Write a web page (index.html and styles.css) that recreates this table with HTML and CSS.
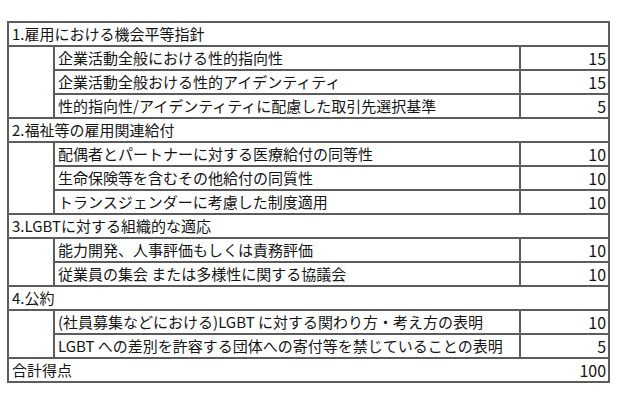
FILE: index.html
```html
<!DOCTYPE html>
<html lang="ja">
<head>
<meta charset="utf-8">
<link rel="stylesheet" href="styles.css">
</head>
<body>
<table class="score">
  <colgroup>
    <col class="c-ind">
    <col class="c-item">
    <col class="c-val">
  </colgroup>
  <tr class="sec"><td colspan="3">1.雇用における機会平等指針</td></tr>
  <tr><td class="ind" rowspan="3"></td><td class="item">企業活動全般における性的指向性</td><td class="val">15</td></tr>
  <tr><td class="item">企業活動全般おける性的アイデンティティ</td><td class="val">15</td></tr>
  <tr><td class="item">性的指向性/アイデンティティに配慮した取引先選択基準</td><td class="val">5</td></tr>
  <tr class="sec"><td colspan="3">2.福祉等の雇用関連給付</td></tr>
  <tr><td class="ind" rowspan="3"></td><td class="item">配偶者とパートナーに対する医療給付の同等性</td><td class="val">10</td></tr>
  <tr><td class="item">生命保険等を含むその他給付の同質性</td><td class="val">10</td></tr>
  <tr><td class="item">トランスジェンダーに考慮した制度適用</td><td class="val">10</td></tr>
  <tr class="sec"><td colspan="3">3.LGBTに対する組織的な適応</td></tr>
  <tr><td class="ind" rowspan="2"></td><td class="item">能力開発、人事評価もしくは責務評価</td><td class="val">10</td></tr>
  <tr><td class="item">従業員の集会 または多様性に関する協議会</td><td class="val">10</td></tr>
  <tr class="sec"><td colspan="3">4.公約</td></tr>
  <tr><td class="ind" rowspan="2"></td><td class="item">(社員募集などにおける)LGBT に対する関わり方・考え方の表明</td><td class="val">10</td></tr>
  <tr><td class="item">LGBT への差別を許容する団体への寄付等を禁じていることの表明</td><td class="val">5</td></tr>
  <tr class="sec"><td colspan="3"><div class="total"><span>合計得点</span><span>100</span></div></td></tr>
</table>
</body>
</html>
```
FILE: styles.css
```css
html, body {
  margin: 0;
  padding: 0;
  background: #ffffff;
}
body {
  padding: 21px 0 0 7px;
  font-family: "Noto Sans CJK JP", "Noto Sans", sans-serif;
  font-size: 15px;
  color: #151515;
}
.score {
  border-collapse: collapse;
  table-layout: fixed;
  width: 603px;
}
.c-ind { width: 46px; }
.c-item { width: 466px; }
.c-val { width: 89px; }
.score td {
  border: 2px solid #5c5c5c;
  height: 22px;
  padding: 0 3px;
  line-height: 22px;
  white-space: nowrap;
  overflow: hidden;
}
.score td.ind {
  padding: 0;
}
.score td.val {
  text-align: right;
  padding-right: 2px;
  font-size: 16px;
}
.total {
  display: flex;
  justify-content: space-between;
}
.total span:last-child {
  font-size: 16px;
  margin-right: -1px;
}
```
